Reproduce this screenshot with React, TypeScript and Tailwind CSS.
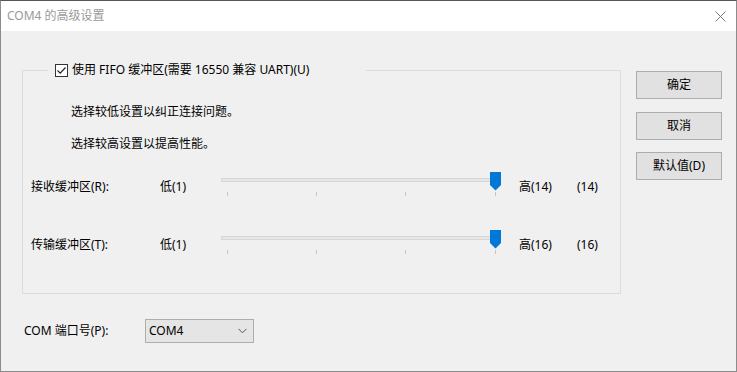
import React from 'react';

const font = "font-['Noto_Sans','Noto_Sans_CJK_SC',sans-serif]";

// Trackbar drawn like the Win32 control: track, ticks, and a pointed thumb
function TrackBar() {
    return (
        <div className="relative w-[280px] h-[24px]">
            <div className="absolute left-0 right-0 top-[6px] h-[4px] border border-[#d6d6d6] bg-[#e7e7e7]" />
            <div className="absolute left-[6px] top-[20px] w-px h-[4px] bg-[#c4c4c4]" />
            <div className="absolute left-[95px] top-[20px] w-px h-[4px] bg-[#c4c4c4]" />
            <div className="absolute left-[184px] top-[20px] w-px h-[4px] bg-[#c4c4c4]" />
            <div className="absolute left-[274px] top-[20px] w-px h-[4px] bg-[#c4c4c4]" />
            <svg className="absolute left-[269px] top-0" width="11" height="19" viewBox="0 0 11 19">
                <path d="M0 0H11V13L5.5 18.5L0 13Z" fill="#0078d7" />
            </svg>
        </div>
    );
}

function BufferRow({ label, high, value }: { label: string; high: string; value: string }) {
    return (
        <div className="flex items-start">
            <span className="w-[129px] mt-[7px]">{label}</span>
            <span className="w-[61px] mt-[7px]">低(1)</span>
            <TrackBar />
            <span className="w-[58px] ml-[18px] mt-[7px]">{high}</span>
            <span className="mt-[7px]">{value}</span>
        </div>
    );
}

function DialogButton({ children }: { children: React.ReactNode }) {
    return (
        <button className="w-[86px] h-[28px] border border-[#adadad] bg-[#e1e1e1] text-[12px] leading-[16px] text-black">
            {children}
        </button>
    );
}

export default function App() {
    return (
        <div className={`w-[737px] h-[372px] flex flex-col bg-[#f0f0f0] border border-[#8c8c8c] border-t-[#555] text-[12px] leading-[16px] text-black ${font}`}>
            {/* Title bar */}
            <div className="h-[30px] bg-white flex items-center justify-between pl-[6px] pr-[9px] shrink-0">
                <span className="text-[#9a9a9a]">COM4 的高级设置</span>
                <svg width="11" height="11" viewBox="0 0 11 11" className="mr-[1px]">
                    <path d="M0.5 0.5L10.5 10.5M10.5 0.5L0.5 10.5" stroke="#7a7a7a" strokeWidth="1" />
                </svg>
            </div>

            <div className="flex flex-1">
                {/* Left content */}
                <div className="pl-[21px] pt-[31px] flex flex-col">
                    <fieldset className="w-[599px] h-[232px] border border-[#dcdcdc] pl-[8px] m-0 p-0 min-w-0">
                        <legend className="ml-[17px] w-[318px] pl-[7px] h-[16px] flex items-center gap-[4px]">
                            <span className="w-[13px] h-[13px] border border-[#333] bg-white flex items-center justify-center">
                                <svg width="11" height="11" viewBox="0 0 11 11">
                                    <path d="M1.5 5.5L4.2 8.2L9.5 2.5" stroke="#222" strokeWidth="1.2" fill="none" />
                                </svg>
                            </span>
                            <span>使用 FIFO 缓冲区(需要 16550 兼容 UART)(U)</span>
                        </legend>
                        <p className="mt-[26px] pl-[40px]">选择较低设置以纠正连接问题。</p>
                        <p className="mt-[16px] pl-[40px]">选择较高设置以提高性能。</p>
                        <div className="mt-[20px] flex flex-col gap-[34px]">
                            <BufferRow label="接收缓冲区(R):" high="高(14)" value="(14)" />
                            <BufferRow label="传输缓冲区(T):" high="高(16)" value="(16)" />
                        </div>
                    </fieldset>

                    {/* COM port */}
                    <div className="mt-[25px] flex items-center pl-[2px]">
                        <span className="w-[121px]">COM 端口号(P):</span>
                        <div className="w-[109px] h-[24px] border border-[#adadad] bg-[#e5e5e5] flex items-center justify-between pl-[3px] pr-[6px]">
                            <span>COM4</span>
                            <svg width="9" height="6" viewBox="0 0 9 6">
                                <path d="M0.5 0.8L4.5 4.8L8.5 0.8" stroke="#555" strokeWidth="1" fill="none" />
                            </svg>
                        </div>
                    </div>
                </div>

                {/* Buttons */}
                <div className="ml-[15px] pt-[40px] flex flex-col gap-[12.5px]">
                    <DialogButton>确定</DialogButton>
                    <DialogButton>取消</DialogButton>
                    <DialogButton>默认值(D)</DialogButton>
                </div>
            </div>
        </div>
    );
}
